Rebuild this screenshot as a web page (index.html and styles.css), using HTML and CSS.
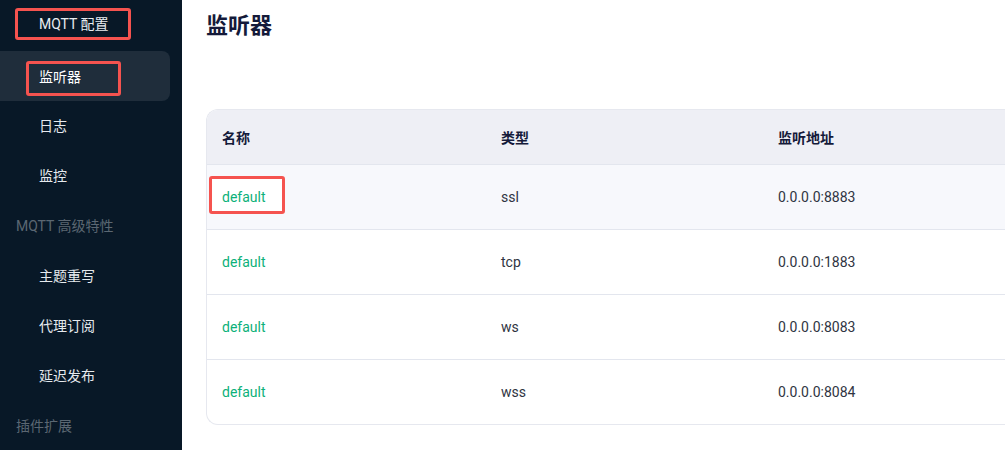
FILE: index.html
```html
<!DOCTYPE html>
<html lang="zh-CN">
<head>
<meta charset="utf-8">
<title>监听器</title>
<link rel="stylesheet" href="styles.css">
</head>
<body>
<div class="app">
  <aside class="sidebar">
    <div class="nav-group marked-group"><span class="mark mark-group">MQTT 配置</span></div>
    <div class="nav-item active"><span class="mark mark-item">监听器</span></div>
    <div class="nav-item">日志</div>
    <div class="nav-item">监控</div>
    <div class="nav-group muted">MQTT 高级特性</div>
    <div class="nav-item">主题重写</div>
    <div class="nav-item">代理订阅</div>
    <div class="nav-item">延迟发布</div>
    <div class="nav-group muted">插件扩展</div>
  </aside>
  <main class="main">
    <h1 class="title">监听器</h1>
    <div class="table">
      <div class="row head">
        <div class="cell">名称</div>
        <div class="cell">类型</div>
        <div class="cell">监听地址</div>
        <div class="cell"></div>
      </div>
      <div class="row hover">
        <div class="cell"><span class="link mark mark-link">default</span></div>
        <div class="cell">ssl</div>
        <div class="cell">0.0.0.0:8883</div>
        <div class="cell"></div>
      </div>
      <div class="row">
        <div class="cell"><span class="link">default</span></div>
        <div class="cell">tcp</div>
        <div class="cell">0.0.0.0:1883</div>
        <div class="cell"></div>
      </div>
      <div class="row">
        <div class="cell"><span class="link">default</span></div>
        <div class="cell">ws</div>
        <div class="cell">0.0.0.0:8083</div>
        <div class="cell"></div>
      </div>
      <div class="row last">
        <div class="cell"><span class="link">default</span></div>
        <div class="cell">wss</div>
        <div class="cell">0.0.0.0:8084</div>
        <div class="cell"></div>
      </div>
    </div>
  </main>
</div>
</body>
</html>
```
FILE: styles.css
```css
* { box-sizing: border-box; }
html, body { margin: 0; padding: 0; }
body {
  width: 1005px;
  height: 450px;
  overflow: hidden;
  font-family: Roboto, "Noto Sans CJK SC", sans-serif;
  background: #fff;
}
.app {
  display: flex;
  height: 450px;
}
.sidebar {
  width: 182px;
  flex: none;
  background: #081827;
  overflow: hidden;
}
.nav-group, .nav-item {
  height: 50px;
  display: flex;
  align-items: center;
  font-size: 14px;
  padding-bottom: 2px;
}
.nav-group {
  padding-left: 16px;
  color: #e8ecf0;
}
.nav-group.muted {
  color: #5b6772;
}
.nav-item {
  padding-left: 39px;
  color: #e6eaee;
  margin-right: 12px;
  border-radius: 0 8px 8px 0;
}
.nav-item.active {
  background: #1f2d3b;
  color: #fff;
  align-items: flex-start;
  padding-top: 10px;
  padding-bottom: 0;
}
.marked-group {
  height: 51px;
  align-items: flex-start;
  padding-top: 8px;
  padding-bottom: 0;
}
.mark {
  border: 3px solid #f5534f;
  border-radius: 3px;
}
.mark-group {
  margin-left: -1px;
  display: inline-flex;
  align-items: center;
  width: 116px;
  height: 32px;
  padding-left: 21px;
  padding-bottom: 2px;
}
.mark-item {
  margin-left: -13px;
  display: inline-flex;
  align-items: center;
  width: 95px;
  height: 35px;
  padding-left: 10px;
  padding-bottom: 6px;
}
.main {
  flex: 1;
  padding: 0 0 0 24px;
  overflow: hidden;
}
.title {
  margin: 0;
  height: 109px;
  padding-top: 11px;
  font-size: 22px;
  font-weight: 700;
  color: #141a3a;
  line-height: 30px;
}
.table {
  width: 1112px;
  border: 1px solid #e6e8ef;
  border-right: none;
  border-radius: 12px 0 0 12px;
  overflow: hidden;
}
.row {
  display: grid;
  grid-template-columns: 279px 277px 278px 278px;
  height: 65px;
  border-bottom: 1px solid #e3e6ee;
  align-items: center;
  font-size: 14px;
  color: #2f3442;
}
.row.last { border-bottom: none; height: 64px; }
.row.head {
  height: 55px;
  background: #eeeff5;
  font-size: 14px;
  font-weight: 700;
  color: #141a3a;
}
.row.hover { background: #f7f8fc; }
.cell {
  padding-left: 15px;
}
.link {
  color: #0cb17a;
}
.mark-link {
  display: inline-flex;
  align-items: center;
  margin-left: -13px;
  margin-bottom: 4px;
  width: 76px;
  height: 38px;
  padding-left: 10px;
  padding-top: 4px;
  background: #fff;
}
```
